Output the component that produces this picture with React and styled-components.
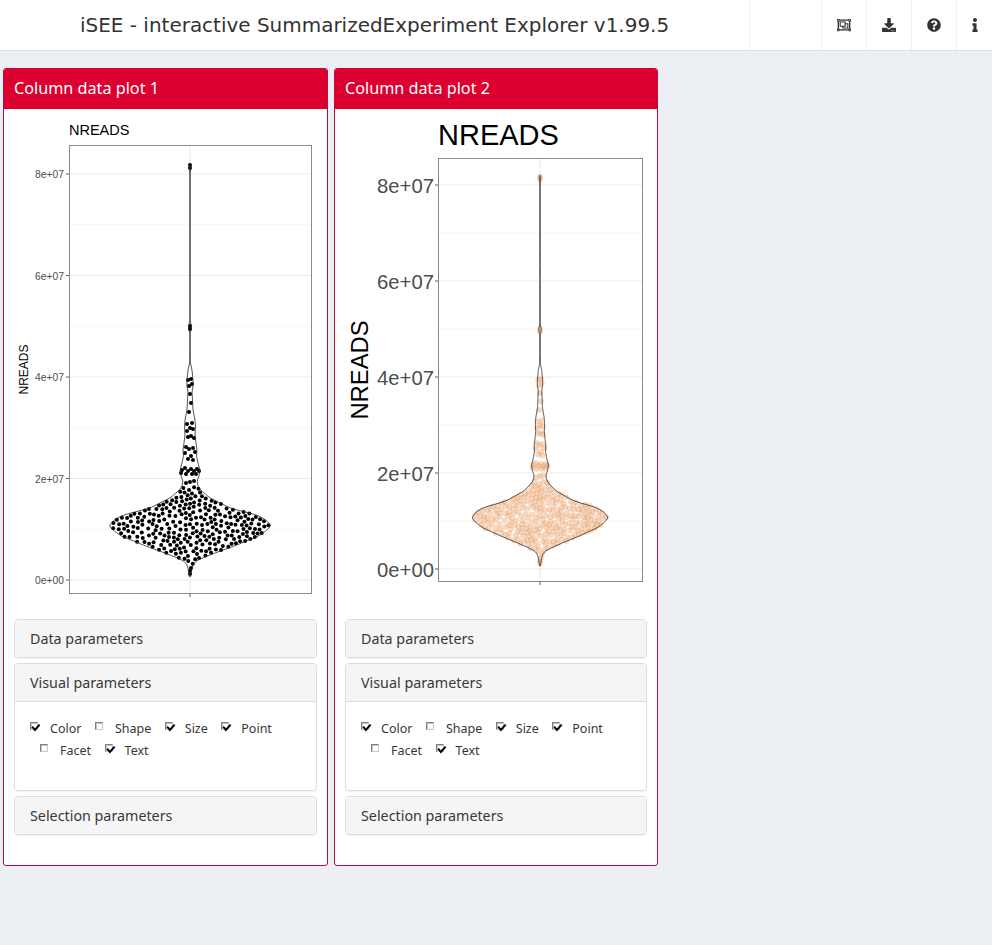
import React from "react";
import styled, { createGlobalStyle } from "styled-components";
import { FaRegObjectGroup, FaDownload, FaQuestionCircle, FaInfo } from "react-icons/fa";

const Global = createGlobalStyle`
  html, body { margin: 0; padding: 0; background: #ecf0f5; }
  body { min-height: 945px; font-family: "Noto Sans", "Open Sans", sans-serif; color: #333; overflow: hidden; }
`;

const TopBar = styled.header`
  display: flex; align-items: stretch; height: 50px; background: #fff;
  border-bottom: 1px solid #dfe3e9; box-sizing: content-box;
`;
const AppTitle = styled.div`
  flex: 1; padding-left: 80px;
  font: 19.98px/51px "DejaVu Sans", sans-serif; color: #333;
`;
const BarCell = styled.div`
  width: ${(p) => p.$w}px; box-sizing: border-box; border-left: 1px solid #eeeeee;
  display: flex; align-items: center; justify-content: center; color: #333; font-size: 14px;
`;
const Main = styled.main`
  display: flex; gap: 6px; padding: 17px 0 0 3px;
`;
const Panel = styled.section`
  width: ${(p) => p.$w}px; height: 798px; box-sizing: border-box;
  border: 1px solid #bd0a3d; border-radius: 3px; background: #fff; overflow: hidden;
`;
const PanelHead = styled.div`
  height: 40px; background: #dc0030; color: #fff; padding-left: 10px;
  font-size: 16.2px; line-height: 38px;
`;
const PlotSvg = styled.svg`
  display: block; width: 100%; height: 500px;
`;
const Stack = styled.div`
  display: flex; flex-direction: column; gap: 5px; padding: 10px 10px 0;
`;
const Box = styled.div`
  border: 1px solid #dddddd; border-radius: 4px; background: #fff;
  box-shadow: 0 1px 1px rgba(0,0,0,.05); overflow: hidden;
`;
const BoxHead = styled.div`
  height: 37px; background: #f5f5f5; padding-left: 15px; font-size: 14.3px; line-height: 37px; color: #383838;
  ${(p) => p.$open && "border-bottom: 1px solid #dddddd;"}
`;
const BoxBody = styled.div`
  padding: 15px 15px 29px; height: 44px; box-sizing: content-box;
`;
const Check = styled.label`
  display: inline-flex; height: 22px; line-height: 24px; font-size: 12.5px; color: #383838;
  margin: 0 3.5px 0 10px; &:first-child { margin-left: 0; }
  vertical-align: top;
`;
const Tick = styled.span`
  position: relative; flex: none; width: 8px; height: 8px; margin: 5px 12px 0 0; box-sizing: border-box;
  border: 1px solid; border-color: #808080 #c8c8c8 #c8c8c8 #808080; background: #fff;
  box-shadow: inset 1px 1px 0 #c4c4c4;
`;
const TickMark = styled.svg`
  position: absolute; left: 0; top: 0; width: 10px; height: 9px; overflow: visible;
`;

const PROFILE = [[164,0],[165,1],[170,.5],[176,0],[320,0],[327,1.6],[334,0],[362,.2],[370,2],[380,3],[385,3.2],[392,2],[400,2.5],[410,3],[420,5],[427,5.5],[435,5],[443,6],[450,7],[456,6.5],[463,8],[470,10],[476,9],[481,7],[486,8],[490,10.5],[498,20],[503,30],[508,40],[512,55],[515,67],[520,76],[525.7,81],[531,76],[537,67],[541,56],[545,47],[550,33],[555,20],[559,10],[562,5],[565,3],[568,2],[571,1.5],[574,.8],[577,0]];
function hw(y) {
  for (let i = 1; i < PROFILE.length; i++) {
    const [a, u] = PROFILE[i - 1], [b, v] = PROFILE[i];
    if (y >= a && y <= b) return u + ((v - u) * (y - a)) / (b - a);
  }
  return 0;
}
const smooth = (y) => (hw(y - 1.5) + hw(y - .75) + hw(y) + hw(y + .75) + hw(y + 1.5)) / 5;

function rng(seed) {
  return () => {
    seed |= 0; seed = (seed + 0x6d2b79f5) | 0;
    let t = Math.imul(seed ^ (seed >>> 15), 1 | seed);
    t = (t + Math.imul(t ^ (t >>> 7), 61 | t)) ^ t;
    return ((t ^ (t >>> 14)) >>> 0) / 4294967296;
  };
}
const POINTS = (() => {
  const pts = [[0,165],[0,168],[0,326],[0,329],[-2,380],[1,379],[2,384],[-1,386],[0,394],[1,403],[-1,412],
    [-3,424],[2,423],[0,428],[3,429],[-3,431],[-2,437],[1,436],[4,438],[-4,447],[-1,449],[3,448],[5,452],[-5,453],[1,456],[-2,459],[3,460],
    [-8,470],[-5,468],[-2,471],[1,469],[4,471],[7,469],[9,471],[-9,473],[-4,474],[2,474],[6,474],[0,482],[-4,483],[4,481],[0,571],[0,574],[1,568]];
  const base = pts.length;
  const r = rng(77);
  for (let i = 0; i < 12000 && pts.length < base + 255; i++) {
    const y = 486 + r() * 80, x = (r() * 2 - 1) * 82;
    if (Math.abs(x) > smooth(y) - 1) continue;
    let ok = true;
    for (const [a, b] of pts) {
      if ((a - x) ** 2 + (b - y) ** 2 < 17) { ok = false; break; }
    }
    if (ok) pts.push([x, y]);
  }
  return pts;
})();

function violinPath(mx, my) {
  const left = [], right = [];
  for (let y = 164; y <= 577; y += 1) {
    const w = smooth(y);
    left.push(`${mx(-w).toFixed(2)} ${my(y).toFixed(2)}`);
    right.unshift(`${mx(w).toFixed(2)} ${my(y).toFixed(2)}`);
  }
  return "M" + left.concat(right).join("L") + "Z";
}

const LABELS = ["8e+07", "6e+07", "4e+07", "2e+07", "0e+00"];

function Plot({ view, frame, cx, y0, step, widthScale, tickSize, titleSize, axisSize, titleY, axisX, tickW, line, dot }) {
  const mx = (d) => cx + d * widthScale;
  const my = (y) => y0 - ((580 - y) * step) / 101.5;
  const [l, t, r, b] = frame;
  const majors = [4, 3, 2, 1, 0].map((k) => y0 - k * step);
  const minors = [3.5, 2.5, 1.5, .5].map((k) => y0 - k * step);
  return (
    <PlotSvg viewBox={view}>
      {minors.map((y) => <line key={y} x1={l} x2={r} y1={y} y2={y} stroke="#f4f4f4" strokeWidth=".8" />)}
      {majors.map((y) => <line key={y} x1={l} x2={r} y1={y} y2={y} stroke="#ebebeb" strokeWidth="1.1" />)}
      <line x1={cx} x2={cx} y1={t} y2={b} stroke="#ebebeb" strokeWidth="1.1" />
      <path d={violinPath(mx, my)} fill="#fff" />
      {POINTS.map(([x, y], i) => (
        <circle key={i} cx={mx(x)} cy={my(y)} r={dot.r} fill={dot.fill} fillOpacity={dot.o} />
      ))}
      <path d={violinPath(mx, my)} fill="none" stroke={line} strokeWidth=".8" />
      <rect x={l + .5} y={t + .5} width={r - l - 1} height={b - t - 1} fill="none" stroke="#8a8a8a" strokeWidth="1" />
      {majors.map((y, i) => (
        <g key={i}>
          <line x1={l - 3} x2={l} y1={y} y2={y} stroke="#333" strokeWidth=".8" />
          <text x={l - tickW} y={y + tickSize * .35 + .6} textAnchor="end" fontFamily="Liberation Sans, sans-serif" fontSize={tickSize} fill="#4d4d4d">{LABELS[i]}</text>
        </g>
      ))}
      <line x1={cx} x2={cx} y1={b} y2={b + 3} stroke="#333" strokeWidth=".8" />
      <text x={l} y={titleY} fontFamily="Liberation Sans, sans-serif" fontSize={titleSize} fill="#000">NREADS</text>
      <text transform={`translate(${axisX} ${(t + b) / 2}) rotate(-90)`} textAnchor="middle" fontFamily="Liberation Sans, sans-serif" fontSize={axisSize} fill="#000">NREADS</text>
    </PlotSvg>
  );
}

const CHECKS = [["Color", true], ["Shape", false], ["Size", true], ["Point", true], ["Facet", false], ["Text", true]];

function Controls() {
  return (
    <Stack>
      <Box><BoxHead>Data parameters</BoxHead></Box>
      <Box>
        <BoxHead $open>Visual parameters</BoxHead>
        <BoxBody>
          {CHECKS.map(([name, on]) => (
            <Check key={name}>
              <Tick>
                {on && (
                  <TickMark viewBox="0 0 10 9">
                    <path d="M1.2 3.6 L3.9 7 L8.6 1.6" fill="none" stroke="#000" strokeWidth="2" />
                  </TickMark>
                )}
              </Tick>
              {name}
            </Check>
          ))}
        </BoxBody>
      </Box>
      <Box><BoxHead>Selection parameters</BoxHead></Box>
    </Stack>
  );
}

export default function App() {
  return (
    <>
      <Global />
      <TopBar>
        <AppTitle>iSEE - interactive SummarizedExperiment Explorer v1.99.5</AppTitle>
        <BarCell $w={72} />
        <BarCell $w={45}><FaRegObjectGroup /></BarCell>
        <BarCell $w={45}><FaDownload /></BarCell>
        <BarCell $w={45}><FaQuestionCircle /></BarCell>
        <BarCell $w={36}><FaInfo /></BarCell>
      </TopBar>
      <Main>
        <Panel $w={325}>
          <PanelHead>Column data plot 1</PanelHead>
          <Plot view="4 109 323 500" frame={[69, 145, 312, 594]} cx={190} y0={580} step={101.5} widthScale={1}
            tickSize={10.3} titleSize={14.5} axisSize={12} titleY={135} axisX={28} tickW={5} line="#2a2a2a"
            dot={{ r: 2, fill: "#000", o: 1 }} />
          <Controls />
        </Panel>
        <Panel $w={324}>
          <PanelHead>Column data plot 2</PanelHead>
          <Plot view="335 109 322 500" frame={[438, 158, 643, 582]} cx={540} y0={569} step={96} widthScale={.843}
            tickSize={20.3} titleSize={29} axisSize={23.8} titleY={145} axisX={368} tickW={4} line="#2a2a2a"
            dot={{ r: 3, fill: "#e8985c", o: .38 }} />
          <Controls />
        </Panel>
      </Main>
    </>
  );
}
